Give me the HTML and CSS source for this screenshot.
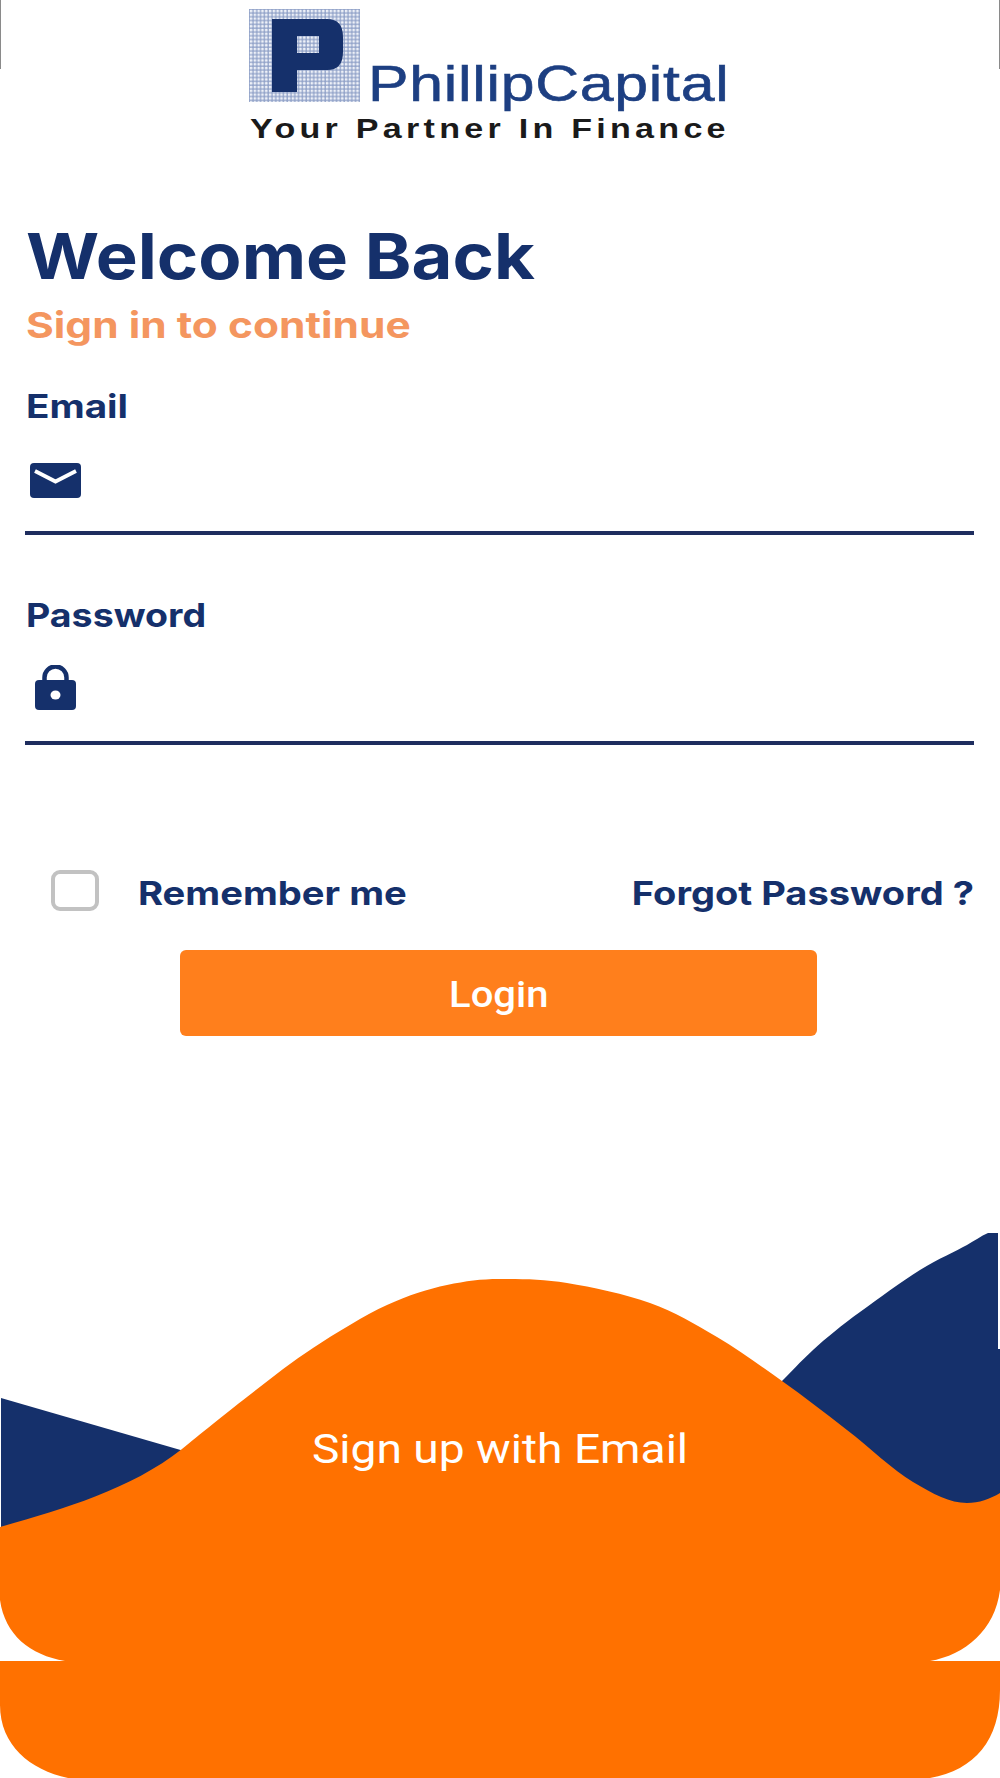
FILE: index.html
```html
<!DOCTYPE html>
<html lang="en">
<head>
<meta charset="utf-8">
<title>PhillipCapital Login</title>
<link rel="stylesheet" href="styles.css">
</head>
<body>
<main class="page">
  <header class="brand">
    <div class="logo">
      <div class="logo-top">
        <svg class="logo-mark" width="111" height="93" viewBox="0 0 111 93" aria-hidden="true">
          <defs>
            <pattern id="dots" width="3.800" height="3.800" patternUnits="userSpaceOnUse">
              <rect width="3.800" height="3.800" fill="#92a3c9"/>
              <rect x="0.800" y="0.800" width="2.600" height="2.600" rx="0.800" fill="#eef1f8"/>
            </pattern>
          </defs>
          <rect width="111" height="93" fill="url(#dots)"/>
          <path fill-rule="evenodd" fill="#15306b" d="M23 10H78Q94 10 94 28V43Q94 61 78 61H48V83H23ZM48 27V44H70V27Z"/>
        </svg>
        <span class="logo-name">PhillipCapital</span>
      </div>
      <div class="logo-tag">Your Partner In Finance</div>
    </div>
  </header>

  <section class="form">
    <h1 class="title">Welcome Back</h1>
    <p class="subtitle">Sign in to continue</p>

    <div class="field field-email">
      <span class="label label-email">Email</span>
      <div class="input">
        <svg class="icon-mail" width="51" height="35" viewBox="0 0 51 35" aria-hidden="true">
          <rect width="51" height="35" rx="4" fill="#15306b"/>
          <path d="M5 8L25.500 18.500L46 8" fill="none" stroke="#fff" stroke-width="3.800"/>
        </svg>
      </div>
    </div>

    <div class="field field-password">
      <span class="label label-password">Password</span>
      <div class="input">
        <svg class="icon-lock" width="41" height="45" viewBox="0 0 41 45" aria-hidden="true">
          <path d="M9.500 17V12.500A11 11 0 0 1 31.500 12.500V17" fill="none" stroke="#15306b" stroke-width="4.500"/>
          <rect y="15" width="41" height="30" rx="4" fill="#15306b"/>
          <ellipse cx="20.500" cy="30" rx="5" ry="4.500" fill="#fff"/>
        </svg>
      </div>
    </div>

    <div class="options">
      <label class="remember">
        <span class="checkbox"></span>
        <span class="option-text remember-text">Remember me</span>
      </label>
      <span class="option-text forgot">Forgot Password ?</span>
    </div>

    <button class="login" type="button"><span class="login-text">Login</span></button>
  </section>

  <footer class="signup">
    <svg class="waves" width="1000" height="548" viewBox="0 1230 1000 548" aria-hidden="true">
      <path fill="#15306b" d="M1 1398L184 1451L182 1500L1 1530Z"/>
      <path fill="#15306b" d="M780 1383C791 1372 800 1362 813 1350C826 1338 842 1325 860 1312C878 1299 902 1281 920 1270C938 1259 956 1251 967 1245C974 1241 981 1236 988 1233H998V1349H1000V1510L900 1500L780 1400Z"/>
      <path fill="#ff7100" d="M0 1527C60 1510 130 1490 182 1449C198 1436 225 1414 247 1397C269 1380 290 1363 313 1348C336 1333 365 1315 387 1305C409 1295 428 1289 447 1285C466 1281 481 1279 499 1279C522 1279 542 1279 567 1283C592 1287 625 1294 650 1303C675 1312 695 1324 717 1337C739 1350 760 1365.500 782 1381C804 1396.500 825 1413 847 1430C869 1447 893 1470 913 1482C933 1494 950 1503 967 1503C979 1503 990 1499 1000 1493V1590C995 1630 965 1655 930 1661H1000V1690C1000 1740 975 1770 930 1778H68C30 1770 0 1745 0 1705V1661H65C30 1655 5 1635 0 1600Z"/>
    </svg>
    <span class="signup-text">Sign up with Email</span>
  </footer>
</main>
</body>
</html>
```

FILE: styles.css
```css
* { box-sizing: border-box; }

html, body {
  margin: 0;
  padding: 0;
  background: #fff;
}

.page {
  position: relative;
  display: flex;
  flex-direction: column;
  width: 1000px;
  height: 1778px;
  overflow: hidden;
  font-family: Inter, "Liberation Sans", sans-serif;
  color: #15306b;
}

.brand {
  position: relative;
  height: 140px;
  padding: 9px 0 0 249px;
}

.brand::before {
  content: "";
  position: absolute;
  top: 0;
  left: 0;
  right: 0;
  height: 69px;
  border-left: 1px solid #8a8a8a;
  border-right: 1px solid #8a8a8a;
}

.logo {
  position: relative;
  width: 477px;
}

.logo-top {
  display: flex;
  align-items: flex-end;
  height: 93px;
  gap: 8px;
}

.logo-mark {
  display: block;
  flex: none;
}

.logo-name {
  margin-bottom: -1px;
  font-family: "Liberation Sans", Arial, sans-serif;
  font-size: 50px;
  line-height: 37px;
  white-space: nowrap;
  color: #1d3f82;
  letter-spacing: 0.600px;
  -webkit-text-stroke: 0.600px #1d3f82;
  transform: scaleX(1.215);
  transform-origin: left center;
}

.logo-tag {
  margin: 15px 0 0 1px;
  font-family: "Liberation Sans", Arial, sans-serif;
  font-weight: 700;
  font-size: 28px;
  line-height: 24px;
  letter-spacing: 3.500px;
  white-space: nowrap;
  color: #1a1a1a;
  transform: scaleX(1.217);
  transform-origin: left center;
}

.form {
  display: flex;
  flex-direction: column;
  padding: 0 26px 0 25px;
}

.title {
  margin: 81px 0 0 1px;
  font-size: 63px;
  line-height: 70px;
  font-weight: 700;
  white-space: nowrap;
  transform: scaleX(1.12);
  transform-origin: left center;
}

.subtitle {
  margin: 12px 0 0 1px;
  font-size: 36px;
  line-height: 44px;
  font-weight: 700;
  color: #f4965f;
  white-space: nowrap;
  transform: scaleX(1.18);
  transform-origin: left center;
}

.field {
  display: flex;
  flex-direction: column;
}

.field-email { margin-top: 39px; }
.field-password { margin-top: 60px; }

.label {
  margin-left: 1px;
  font-size: 33px;
  line-height: 40px;
  font-weight: 700;
  transform-origin: left center;
}

.label-email { transform: scaleX(1.17); }
.label-password { transform: scaleX(1.137); }

.input {
  display: flex;
  align-items: flex-start;
  border-bottom: 4px solid #1e2d5e;
}

.field-email .input {
  height: 109px;
  padding: 37px 0 0 5px;
}

.field-password .input {
  height: 110px;
  padding: 30px 0 0 10px;
}

.icon-mail, .icon-lock {
  display: block;
  flex: none;
}

.options {
  display: flex;
  align-items: center;
  justify-content: space-between;
  margin-top: 127px;
  height: 41px;
}

.remember {
  display: flex;
  align-items: center;
  padding-left: 26px;
}

.checkbox {
  flex: none;
  width: 48px;
  height: 41px;
  border: 4px solid #c2c2c2;
  border-radius: 9px;
  transform: translateY(-2px);
}

.option-text {
  font-size: 33px;
  line-height: 40px;
  font-weight: 700;
  white-space: nowrap;
}

.remember-text {
  margin-left: 39px;
  transform: scaleX(1.157);
  transform-origin: left center;
}

.forgot {
  transform: scaleX(1.152);
  transform-origin: right center;
}

.login {
  align-self: center;
  width: 637px;
  height: 86px;
  margin: 37px 0 0 -2px;
  padding: 3px 0 0;
  border: 0;
  border-radius: 6px;
  background: #ff7f1c;
  color: #fff;
  font-family: Roboto, sans-serif;
  font-weight: 500;
  font-size: 36px;
  cursor: pointer;
}

.login-text {
  display: inline-block;
  transform: scaleX(1.11);
}

.signup {
  position: relative;
  margin-top: auto;
  height: 548px;
}

.waves {
  display: block;
}

.signup-text {
  position: absolute;
  top: 196px;
  left: 0;
  right: 0;
  text-align: center;
  font-family: Roboto, sans-serif;
  font-size: 40px;
  line-height: 48px;
  color: #fff;
  transform: scaleX(1.153);
}
```
